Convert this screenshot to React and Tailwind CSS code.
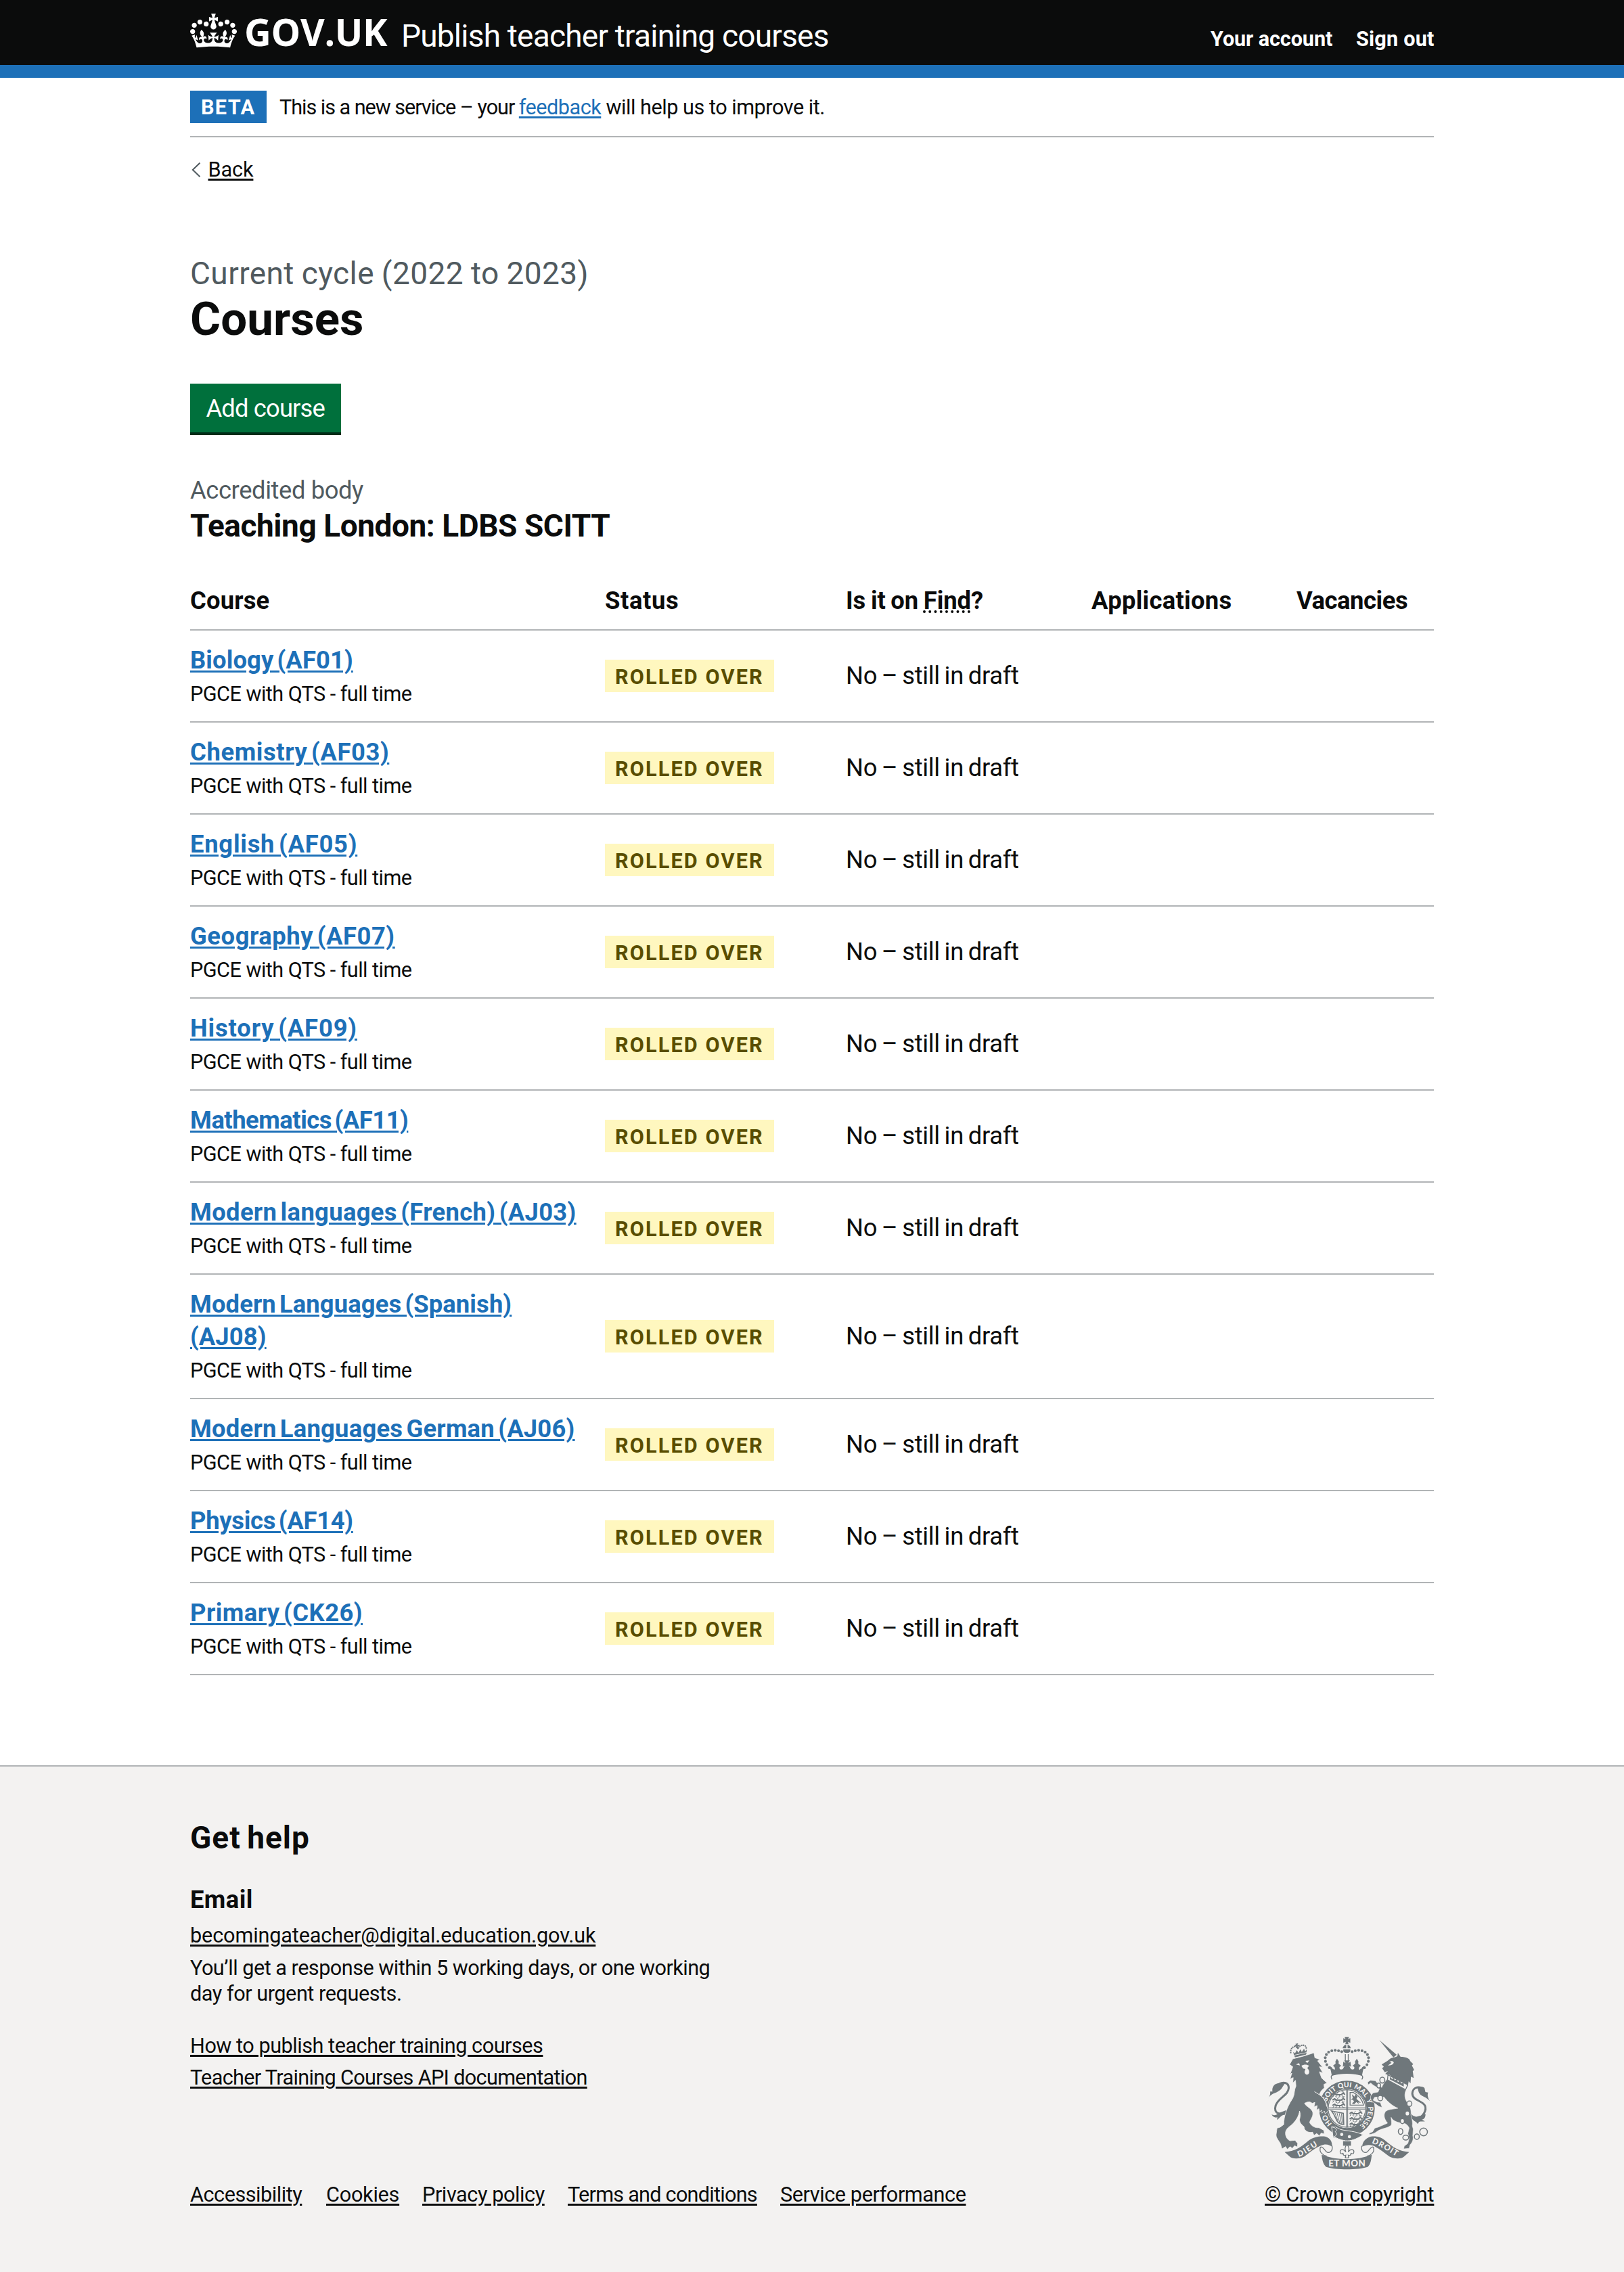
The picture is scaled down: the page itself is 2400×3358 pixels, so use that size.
import React from "react";

const courses = [
  ["Biology (AF01)", "tracking-[0.1px]"],
  ["Chemistry (AF03)", "tracking-[0.6px]"],
  ["English (AF05)", "tracking-[0.75px]"],
  ["Geography (AF07)", "tracking-[0.55px]"],
  ["History (AF09)", "tracking-[0.85px]"],
  ["Mathematics (AF11)", "tracking-[-0.48px]"],
  ["Modern languages (French) (AJ03)", "tracking-[0.33px]"],
  ["Modern Languages (Spanish) (AJ08)", "tracking-[0.1px]"],
  ["Modern Languages German (AJ06)", "tracking-[0.22px]"],
  ["Physics (AF14)", "tracking-[-0.29px]"],
  ["Primary (CK26)", "tracking-[0.46px]"],
];

const footerLinks = [
  ["Accessibility", "w-[201px] tracking-[-0.47px]"],
  ["Cookies", "w-[142px] tracking-[-0.25px]"],
  ["Privacy policy", "w-[215px] tracking-[-0.42px]"],
  ["Terms and conditions", "w-[314px] tracking-[-0.75px]"],
  ["Service performance", "tracking-[-0.42px]"],
];

const grid = "grid grid-cols-[613px_356px_364px_303px_202px]";
const link = "underline decoration-[3px] underline-offset-[3px]";

function Crown() {
  return (
    <svg viewBox="0 0 132 97" className="mt-5 h-[51px] w-[69px] shrink-0" fill="currentColor">
      <path
        fillRule="evenodd"
        d="M25 30.2c3.5 1.5 7.7-.2 9.1-3.7 1.5-3.6-.2-7.8-3.9-9.2-3.6-1.4-7.6.3-9.1 3.9-1.4 3.5.3 7.5 3.9 9zM9 39.5c3.6 1.5 7.8-.2 9.2-3.7 1.5-3.6-.2-7.8-3.9-9.1-3.6-1.5-7.6.2-9.1 3.8-1.4 3.5.3 7.5 3.8 9zM4.4 57.2c3.5 1.5 7.7-.2 9.1-3.8 1.5-3.6-.2-7.7-3.9-9.1-3.5-1.5-7.6.3-9.1 3.8-1.4 3.5.3 7.6 3.9 9.1zm38.3-21.4c3.5 1.5 7.7-.2 9.1-3.8 1.5-3.6-.2-7.7-3.9-9.1-3.6-1.5-7.6.3-9.1 3.8-1.3 3.6.4 7.7 3.9 9.1zm64.4-5.6c-3.6 1.5-7.8-.2-9.1-3.7-1.5-3.6.2-7.8 3.8-9.2 3.6-1.4 7.7.3 9.2 3.9 1.3 3.5-.4 7.5-3.9 9zm15.9 9.3c-3.6 1.5-7.7-.2-9.1-3.7-1.5-3.6.2-7.8 3.7-9.1 3.6-1.5 7.7.2 9.2 3.8 1.5 3.5-.3 7.5-3.8 9zm4.7 17.7c-3.6 1.5-7.8-.2-9.2-3.8-1.5-3.6.2-7.7 3.9-9.1 3.6-1.5 7.7.3 9.2 3.8 1.3 3.5-.4 7.6-3.9 9.1zM89.3 35.8c-3.6 1.5-7.8-.2-9.2-3.8-1.4-3.6.2-7.7 3.9-9.1 3.6-1.5 7.7.3 9.2 3.8 1.4 3.6-.3 7.7-3.9 9.1zM69.7 17.7l8.9 4.7V9.3l-8.9 2.8c-.2-.3-.5-.6-.9-.9L72.4 0H59.6l3.5 11.2c-.3.3-.6.5-.9.9l-8.8-2.8v13.1l8.8-4.7c.3.3.6.7.9.9l-5 15.4v.1c-.2.8-.4 1.6-.4 2.4 0 4.1 3.1 7.5 7 8.1h.2c.3 0 .7.1 1 .1.4 0 .7 0 1-.1h.2c4-.6 7.1-4.1 7.1-8.1 0-.8-.1-1.7-.4-2.4V34l-5.1-15.4c.4-.2.7-.6 1-.9zM66 92.8c16.9 0 32.8 1.1 47.1 3.2 4-16.9 8.9-26.7 14-33.5l-9.6-3.4c1 4.9 1.1 7.2 0 10.2-1.5-1.4-3-4.3-4.2-8.7L108.6 76c2.8-2 5-3.2 7.5-3.3-4.4 9.4-10 11.9-13.6 11.2-4.3-.8-6.3-4.6-5.6-7.9 1-4.7 5.7-5.9 8-.5 4.3-8.7-3-11.4-7.6-8.8 7.1-7.2 7.9-13.5 2.1-21.1-8 6.1-8.1 12.3-4.5 20.8-4.7-5.4-12.1-2.5-9.5 6.2 3.4-5.2 7.9-2 7.2 3.1-.6 4.3-6.4 7.8-13.5 7.2-10.3-.9-10.9-8-11.2-13.8 2.5-.5 7.1 1.8 11 7.3L80.2 60c-4.1 4.4-8 5.3-12.3 5.4 1.4-4.4 8-11.6 8-11.6H55.5s6.4 7.2 7.9 11.6c-4.2-.1-8-1-12.3-5.4l1.4 16.4c3.9-5.5 8.5-7.7 10.9-7.3-.3 5.8-.9 12.8-11.1 13.8-7.2.6-12.9-2.9-13.5-7.2-.7-5 3.8-8.3 7.1-3.1 2.7-8.7-4.6-11.6-9.4-6.2 3.7-8.5 3.6-14.7-4.6-20.8-5.8 7.6-5 13.9 2.2 21.1-4.7-2.6-11.9.1-7.7 8.8 2.3-5.5 7.1-4.2 8.1.5.7 3.3-1.3 7.1-5.7 7.9-3.5.7-9-1.8-13.5-11.2 2.5.1 4.7 1.3 7.5 3.3l-4.7-15.4c-1.2 4.4-2.7 7.2-4.3 8.7-1.1-3-.9-5.3 0-10.2l-9.5 3.4c5 6.9 9.9 16.7 14 33.5 14.8-2.1 30.8-3.2 47.7-3.2z"
      />
    </svg>
  );
}

const ink = "#6f777b";
const paper = "#f3f2f1";

const leftPearls = [[388,205],[374,194],[363,181],[357,166],[356,150],[361,136],[371,125],[385,119],[400,117],[415,119],[429,123]];
const motto = [["HO", 97], ["SOIT", 213], ["QUI", 285], ["MAL", 359], ["Y", 412], ["PENSE", 482]];

function Lions({ x, y }) {
  return (
    <g transform={`translate(${x} ${y})`} fill="none" stroke={ink} strokeWidth="6" strokeLinecap="round" strokeLinejoin="round">
      {[0, 24, 48].map((dy) => (
        <g key={dy} transform={`translate(0 ${dy})`}>
          <path d="M6 6l8-4 6 6h22l10-7 6 5" />
          <path strokeWidth="3" d="M12 8l-6 9M22 9l-4 8 6 1M34 9l3 8-6 1M45 8l5 9 6-1M54 4V-4l-8-1M24 3l6-5" />
        </g>
      ))}
    </g>
  );
}

function RoyalArms() {
  return (
    <svg viewBox="100 50 725 600" className="ml-[5px] h-[200px] w-[242px]" fill={ink} fontFamily="'Lato', 'Liberation Sans', sans-serif" fontWeight="900">
      {/* garter */}
      <circle cx="452" cy="375" r="105" fill={paper} stroke={ink} strokeWidth="37" />
      <path id="garter" d="M452 469A94 94 0 0 1 452 281A94 94 0 0 1 452 469" fill="none" />
      {motto.map(([word, at]) => (
        <text key={word} fontSize="31" fill={paper} textAnchor="middle">
          <textPath href="#garter" startOffset={at}>{word}</textPath>
        </text>
      ))}
      <circle cx="452" cy="375" r="83" fill={paper} stroke={ink} strokeWidth="4" />
      <path d="M448 292h3v166h-3zM454 292h3v166h-3zM370 370h164v3h-164zM370 376h164v3h-164z" />
      <Lions x="384" y="306" />
      <Lions x="460" y="390" />
      <path d="M466 304H480Q516 322 526 360H466Z" fill="none" stroke={ink} strokeWidth="4" />
      <path d="M474 312L486 322L490 312L500 322L494 332L514 350L502 348L506 356L494 346L484 356L474 352L484 344L478 336L470 338L478 328Z" />
      <path d="M384 386L436 396L438 446C424 446 414 440 408 430C400 414 396 400 384 386Z" fill="none" stroke={ink} strokeWidth="5" />
      <path d="M398 392L412 430M408 394L420 438M418 396L428 442M428 398L432 442" stroke={ink} strokeWidth="3" />
      {/* buckle and strap end */}
      <path d="M384 456C398 452 410 462 424 468C454 476 490 474 524 492C492 512 470 520 446 518C420 514 404 506 390 496Z" stroke={paper} strokeWidth="3" />
      <path d="M388 458C404 460 412 470 400 478C410 486 406 498 392 500" fill="none" stroke={ink} strokeWidth="8" />
      <path d="M388 458C404 460 412 470 400 478C410 486 406 498 392 500" fill="none" stroke={paper} strokeWidth="3" />
      <circle cx="429" cy="490" r="7" fill={paper} />
      <circle cx="463" cy="500" r="7" fill={paper} />

      {/* lion's tail */}
      <path d="M186 388C158 408 126 398 136 362C148 326 192 318 194 284C194 260 172 256 152 266" fill="none" stroke={ink} strokeWidth="9" />
      <path d="M102 332C112 318 112 312 112 300L122 300C120 286 124 272 138 266C152 260 170 258 178 264C168 274 164 292 146 300C134 308 116 308 102 332Z" />
      <path d="M118 402C132 408 142 402 152 394L184 382L178 404C164 400 158 414 142 426L144 414C134 418 124 412 118 402Z" />
      {/* lion */}
      <path d="M198 180L212 155L262 142L306 128L310 150L333 158L322 164L344 192L330 190L346 218L330 212L340 240L364 262L350 268L352 284C338 294 336 300 330 312C350 326 362 346 364 366L370 384L356 399L352 386L342 396L340 382L330 392L328 376L318 382L320 362L306 368L310 348L298 352C288 342 274 346 264 352C272 368 298 374 301 394C303 414 288 424 287 438C296 454 312 462 328 460L350 472L352 488L338 484L330 496L318 486L306 494L300 480C280 484 262 474 262 456C252 446 242 440 242 424C246 408 246 396 242 386C240 408 222 436 204 450C190 460 182 468 180 480C178 496 186 512 200 518L222 516L234 530L232 546L220 540L210 552L200 544L188 556L180 544L164 554L160 540C158 524 138 510 138 492L142 462L156 458L172 446C172 410 186 370 208 336C222 316 216 298 226 276L224 250L212 262L214 238L200 244L208 218L200 224L212 190Z" stroke={paper} strokeWidth="2.5" />
      <path d="M308 300L330 314C350 328 360 346 362 366" fill="none" stroke={paper} strokeWidth="3" />
      <path d="M226 180L244 184L240 174Z M268 164L286 162L276 174Z" fill={paper} />
      <path d="M250 186C260 180 274 178 284 186L276 196C284 202 288 214 282 222C274 230 264 222 264 212L268 200L258 198Z" fill={paper} />
      {/* lion's crown */}
      <path d="M218 140L274 128L270 136L222 148Z M214 124L222 130L230 116L237 128L246 112L252 124L262 110L267 122L274 112L273 126L217 138Z" />
      <path d="M203 130L203 118L208 106L218 100L228 102L236 110M236 108L244 98L256 93L268 98L273 110" fill="none" stroke={ink} strokeWidth="6" strokeDasharray="6 3" />
      <path d="M224 88L236 86L232 94L242 92L240 102L234 98L236 112L228 106L228 98L220 102L222 92L228 94Z" />

      {/* imperial crown */}
      <path d="M442 58H461L457 68L467 63V84L457 79L459 90H445L447 79L436 84V63L446 68Z" />
      <path d="M433 108Q436 94 449 92V108Z M455 92Q467 95 469 108H455Z M436 113H467V118Q467 128 452 128Q436 128 436 118Z" />
      <path d="M443 134h4v30h-4zM456 134h4v30h-4z" />
      {leftPearls.map(([x, y]) => (
        <g key={`${x}-${y}`}>
          <circle cx={x} cy={y} r="6.2" />
          <circle cx={904 - x} cy={y} r="6.2" />
        </g>
      ))}
      <path d="M374 186L384 192L390 204C398 206 402 198 396 190L390 186L402 176L401 166L408 154L416 166L415 176L427 186L420 190C416 200 424 206 434 200L442 186L434 190L436 168L446 174L440 162H465L458 174L468 168L470 190L462 186L470 200C480 206 488 200 484 190L477 186L489 176L488 166L496 154L503 166L502 176L514 186L508 190C502 198 506 206 514 204L520 192L530 186C524 202 521 216 519 230C480 218 424 218 385 230C383 216 380 202 374 186Z" />
      <path d="M386 246C376 230 388 224 404 222C436 216 468 216 500 222C518 224 528 232 518 246" fill="none" stroke={ink} strokeWidth="4" />

      {/* unicorn's tail */}
      <path d="M764 428C788 410 808 384 798 362C784 338 742 340 742 308C744 284 764 276 784 284" fill="none" stroke={ink} strokeWidth="9" />
      <path d="M764 280C776 276 792 278 796 284L800 302L812 304C808 316 810 326 820 342C806 326 786 322 776 312C768 302 768 290 764 280Z" />
      <path d="M728 384C740 410 756 416 774 408L790 404L800 398C802 414 794 424 784 424L798 432C786 434 776 430 772 434L766 444C760 432 744 430 738 416Z" />
      {/* unicorn */}
      <path d="M596 72L673 137L658 148Z" />
      <path d="M678 128L690 146C714 146 732 154 732 164L746 178L740 184L750 204L744 210L748 240L736 234L734 264L726 254L722 276C702 264 676 250 650 240C648 228 638 222 634 226L622 222L634 208L620 214L608 196L616 190L606 180L622 170C636 164 644 150 656 150L670 146L676 142Z" />
      <path d="M634 184C646 184 658 182 660 170L652 164L640 168L650 172Z" fill={paper} />
      <path d="M630 246C656 256 688 274 714 294C706 312 708 330 718 346C734 362 738 384 736 404C742 424 744 440 742 452L746 466L744 496C748 508 744 524 732 536L728 552L704 554L706 542L722 530L728 508L722 486L728 462C722 446 708 438 694 440C672 436 654 428 648 414C648 426 652 440 648 450C634 462 604 464 590 474C578 484 562 490 550 490L552 484L566 478L576 462L590 458L632 440C620 424 612 408 622 390C632 378 656 378 678 374C650 362 630 342 616 324C600 328 584 322 574 326L568 338L584 346L600 348L608 370L594 366L576 352C562 344 554 334 558 318L568 306L590 302L596 288C586 280 572 276 558 262L546 270L544 258L556 250L578 252L590 266L606 282C612 268 620 256 630 246Z" stroke={paper} strokeWidth="2" />
      <path d="M634 226L722 270L712 292L632 248Z" fill={paper} stroke={ink} strokeWidth="4" />
      <path d="M642 246L644 234L652 244L660 240L664 250L674 244L678 258L688 252L692 264L704 262L704 278Z" />
      {/* chain */}
      <g fill={paper} stroke={ink} strokeWidth="4.5">
        <ellipse cx="609" cy="249" rx="11" ry="13" />
        <ellipse cx="593" cy="273" rx="8" ry="11" />
        <ellipse cx="600" cy="329" rx="11" ry="12" />
        <ellipse cx="729" cy="354" rx="11" ry="12" />
        <ellipse cx="720" cy="397" rx="10" ry="11" />
        <ellipse cx="698" cy="431" rx="9" ry="11" />
        <ellipse cx="690" cy="477" rx="10" ry="13" />
        <ellipse cx="713" cy="504" rx="13" ry="11" />
        <ellipse cx="762" cy="500" rx="11" ry="12" />
        <circle cx="792" cy="479" r="17" />
      </g>

      {/* fleur-de-lis */}
      <path d="M435 520H470V540H435Z" />
      <path d="M452 534C464 548 462 556 458 568C466 554 484 554 483 568C482 578 474 578 470 572C472 584 462 584 458 582L460 594H445L447 582C443 584 433 584 435 572C431 578 423 578 422 568C421 554 439 554 447 568C443 556 441 548 452 534Z" fill={paper} stroke={ink} strokeWidth="4" />

      {/* scroll */}
      <path d="M176 568C220 566 250 546 284 516C304 500 340 496 358 500C378 506 388 524 386 544C372 534 356 530 336 540C312 550 286 570 264 588C244 600 208 600 198 588Z" />
      <path d="M728 568C684 566 654 546 620 516C600 500 578 496 556 500C536 506 520 524 520 544C536 536 552 534 568 540C592 550 618 570 640 588C660 600 696 600 706 588Z" />
      <path d="M386 540C392 566 372 576 360 566C352 556 340 540 334 548C328 570 346 582 362 586" fill="none" stroke={ink} strokeWidth="4" />
      <path d="M518 540C512 566 532 576 544 566C552 556 564 540 570 548C576 570 558 582 542 586" fill="none" stroke={ink} strokeWidth="4" />
      <path d="M340 580C410 606 494 606 562 580C560 600 558 622 544 634C500 648 404 648 360 634C346 622 342 600 340 580Z" />
      <path id="dieu" d="M236 590C270 580 300 552 336 532" fill="none" />
      <path id="droit" d="M556 526C596 540 636 566 680 592" fill="none" />
      <text fontSize="35" fill={paper}><textPath href="#dieu" startOffset="3" textLength="98">DIEU</textPath></text>
      <text fontSize="35" fill={paper}><textPath href="#droit" startOffset="6" textLength="124">DROIT</textPath></text>
      <text x="452" y="632" fontSize="40" fill={paper} textAnchor="middle" textLength="164">ET MON</text>
    </svg>
  );
}

export default function App() {
  return (
    <div className="min-h-[3358px] w-[2400px] bg-white font-['Roboto','Liberation_Sans',sans-serif] text-[30.64px] text-[#0b0c0c]">
      <header className="flex h-[115px] items-start border-b-[19px] border-[#1d70b8] bg-[#0b0c0c] px-[281px] whitespace-nowrap text-white">
        <Crown />
        <div className="mt-[17px] ml-[11px] w-[232px] shrink-0 font-['Open_Sans',sans-serif] text-[55px] leading-[60px] font-bold tracking-[-0.3px]">GOV.UK</div>
        <div className="mt-[23px] w-[1196px] shrink-0 text-[46px] leading-[60px] tracking-[-0.78px]">Publish teacher training courses</div>
        <nav className="mt-[38px] flex leading-10 font-bold">
          <a className="w-[215px] tracking-[-0.11px]">Your account</a>
          <a className="tracking-[0.19px]">Sign out</a>
        </nav>
      </header>

      <main className="mx-[281px] w-[1838px]">
        <div className="flex h-[88px] border-b-2 border-[#b1b4b6] pt-[19px] leading-[48px] whitespace-nowrap">
          <strong className="h-12 w-[113px] bg-[#1d70b8] pt-[1px] pl-4 leading-[47px] tracking-[1.32px] text-white">BETA</strong>
          <p className="mt-[1px] ml-[19px]">
            <span className="tracking-[-1.04px]">This is a new service – your </span>
            <a className={`${link} tracking-[-0.5px] text-[#1d70b8]`}>feedback</a>
            <span className="tracking-[-0.47px]"> will help us to improve it.</span>
          </p>
        </div>

        <div className="mt-[28px] flex h-10 items-center leading-10">
          <svg viewBox="0 0 14 22" className="ml-[2px] h-[22px] w-[14px]" fill="none" stroke="#505a5f" strokeWidth="2">
            <path d="M12.5 0.8L1.8 11L12.5 21.2" />
          </svg>
          <a className={`${link} ml-[10.5px] tracking-[-0.1px]`}>Back</a>
        </div>

        <div className="mt-[102.6px] text-[46px] leading-[60px] tracking-[0.42px] [word-spacing:-1px] text-[#505a5f]">Current cycle (2022 to 2023)</div>
        <h1 className="mt-[2.5px] text-[69px] leading-[72px] font-bold tracking-[0.05px]">Courses</h1>

        <button className="mt-[58.9px] block h-[72px] w-[223px] bg-[#00703c] pt-[2px] pl-[23.5px] text-left text-[36.4px] leading-[70px] tracking-[-0.87px] whitespace-nowrap text-white shadow-[0_4px_0_#002d18]">Add course</button>

        <div className="mt-[62px] text-[36.4px] leading-[48px] tracking-[-0.42px] text-[#505a5f]">Accredited body</div>
        <h2 className="text-[46px] leading-[56px] font-bold tracking-[-0.45px]">Teaching London: LDBS SCITT</h2>

        <div className={`${grid} h-[127px] border-b-2 border-[#b1b4b6] pt-[58.8px] text-[36.4px] leading-[48px] font-bold whitespace-nowrap`}>
          <div className="tracking-[0.15px]">Course</div>
          <div className="tracking-[0.62px]">Status</div>
          <div className="tracking-[-0.1px] [word-spacing:-1.2px]">Is it on <abbr className="underline decoration-dotted decoration-[3.6px] underline-offset-[3px] [text-decoration-skip-ink:none]">Find</abbr>?</div>
          <div className="-ml-[1px] tracking-[0.28px]">Applications</div>
          <div className="-ml-[1px] tracking-[-0.45px]">Vacancies</div>
        </div>
        {courses.map(([name, tracking]) => (
          <div key={name} className={`${grid} min-h-[136px] items-center border-b-2 border-[#b1b4b6]`}>
            <div className="self-start pt-[20px] pb-[21.4px]">
              <div className={`w-[590px] text-[36.4px] leading-[48px] font-bold [word-spacing:-4px] text-[#1d70b8] ${tracking}`}>
                <a className={link}>{name}</a>
              </div>
              <div className="mt-[6.6px] leading-[38px] tracking-[-0.54px]">PGCE with QTS - full time</div>
            </div>
            <div>
              <strong className="block h-12 w-[250px] bg-[#fff7bf] pt-[2px] pl-[15px] leading-[47px] tracking-[2.14px] whitespace-nowrap text-[#594d00]">ROLLED OVER</strong>
            </div>
            <div className="pt-[1px] text-[36.4px] leading-[48px] tracking-[-0.3px] [word-spacing:-2px]">No – still in draft</div>
          </div>
        ))}
      </main>

      <footer className="mt-[133px] flex h-[749px] border-t-2 border-[#b1b4b6] bg-[#f3f2f1] pl-[281px] whitespace-nowrap">
        <div className="w-[1587px] shrink-0 pt-[75px] leading-[38px]">
          <h2 className="text-[46px] leading-[60px] font-bold tracking-[1px] [word-spacing:-3px]">Get help</h2>
          <h3 className="mt-[38px] text-[36.4px] leading-[48px] font-bold tracking-[0.4px]">Email</h3>
          <div className="mt-[10px] tracking-[-0.13px]"><a className={link}>becomingateacher@digital.education.gov.uk</a></div>
          <div className="mt-[10px] tracking-[-0.51px]">You’ll get a response within 5 working days, or one working</div>
          <div className="tracking-[-0.45px]">day for urgent requests.</div>
          <div className="mt-[38.6px] tracking-[-0.47px]"><a className={link}>How to publish teacher training courses</a></div>
          <div className="mt-[9.7px] tracking-[-0.67px]"><a className={link}>Teacher Training Courses API documentation</a></div>
          <ul className="mt-[134.3px] flex">
            {footerLinks.map(([label, cls]) => (
              <li key={label} className={cls}><a className={link}>{label}</a></li>
            ))}
          </ul>
        </div>
        <div className="flex h-[652px] flex-col justify-end leading-[38px]">
          <RoyalArms />
          <div className="mt-[17px] ml-[1px] tracking-[-0.19px]"><a className={link}>© Crown copyright</a></div>
        </div>
      </footer>
    </div>
  );
}
